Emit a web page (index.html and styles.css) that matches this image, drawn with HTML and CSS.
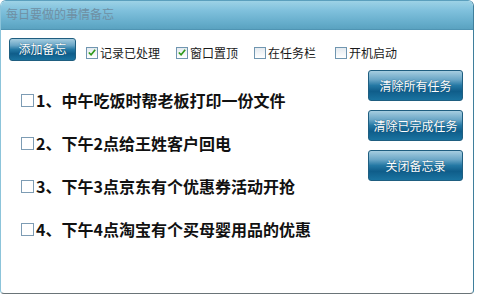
FILE: index.html
```html
<!DOCTYPE html>
<html lang="zh-CN">
<head>
<meta charset="utf-8">
<title>每日要做的事情备忘</title>
<link rel="stylesheet" href="styles.css">
</head>
<body>
<div class="window">
  <div class="titlebar">每日要做的事情备忘</div>
  <div class="content">
    <div class="toolbar">
      <button class="btn btn-add">添加备忘</button>
      <label class="chk chk-1"><span class="box checked"><svg viewBox="0 0 11 11" width="11" height="11"><path d="M2 5.5 L4.5 8 L9 2.5" fill="none" stroke="#2f9a1a" stroke-width="1.8"/></svg></span>记录已处理</label>
      <label class="chk chk-2"><span class="box checked"><svg viewBox="0 0 11 11" width="11" height="11"><path d="M2 5.5 L4.5 8 L9 2.5" fill="none" stroke="#2f9a1a" stroke-width="1.8"/></svg></span>窗口置顶</label>
      <label class="chk chk-3"><span class="box"></span>在任务栏</label>
      <label class="chk chk-4"><span class="box"></span>开机启动</label>
    </div>
    <div class="main">
      <ul class="tasks">
        <li class="task"><span class="tbox"></span>1、中午吃饭时帮老板打印一份文件</li>
        <li class="task"><span class="tbox"></span>2、下午2点给王姓客户回电</li>
        <li class="task"><span class="tbox"></span>3、下午3点京东有个优惠券活动开抢</li>
        <li class="task"><span class="tbox"></span>4、下午4点淘宝有个买母婴用品的优惠</li>
      </ul>
      <div class="actions">
        <button class="btn btn-side">清除所有任务</button>
        <button class="btn btn-side">清除已完成任务</button>
        <button class="btn btn-side">关闭备忘录</button>
      </div>
    </div>
  </div>
</div>
</body>
</html>
```
FILE: styles.css
```css
html, body {
  margin: 0;
  padding: 0;
  background: #ffffff;
}
body {
  font-family: "Noto Sans CJK SC", "Noto Sans", sans-serif;
  width: 479px;
  height: 297px;
  overflow: hidden;
}
.window {
  box-sizing: border-box;
  width: 474px;
  height: 294px;
  border: 1px solid #5b9fbd;
  border-right-color: #3f7f9c;
  border-bottom-color: #6a7478;
  border-left-color: #8cc4da;
  border-radius: 6px 6px 4px 4px;
  background: #ffffff;
  overflow: hidden;
  display: flex;
  flex-direction: column;
}
.titlebar {
  height: 29px;
  box-sizing: border-box;
  padding: 5px 0 0 5px;
  font-size: 12px;
  line-height: 16px;
  color: #6f8fa3;
  background: linear-gradient(#9dd2e6 0%, #7fc0dc 35%, #64acca 80%, #5aa2c0 100%);
  border-bottom: 1px solid #4f94b3;
}
.content {
  flex: 1;
  display: flex;
  flex-direction: column;
}
.toolbar {
  display: flex;
  align-items: center;
  padding: 8px 0 0 8px;
  height: 22px;
}
.btn {
  font-family: "Noto Sans CJK SC", sans-serif;
  color: #ffffff;
  font-size: 12px;
  line-height: 14px;
  padding: 0;
  border: 1px solid #1f5e80;
  border-radius: 3px;
  background: linear-gradient(#a6cde0 0%, #6aa6c6 30%, #2478a4 50%, #0f5d8a 70%, #1a73a0 100%);
  text-shadow: 0 0 1px #0b3f60;
}
.btn-add {
  width: 67px;
  height: 23px;
  margin-right: 10px;
}
.chk {
  display: flex;
  align-items: center;
  font-size: 12px;
  line-height: 14px;
  color: #1a1a1a;
  margin-top: 7px;
}
.box {
  box-sizing: border-box;
  width: 12px;
  height: 12px;
  border: 1px solid #7096b0;
  background: linear-gradient(#e4eaf0, #ffffff);
  margin-right: 2px;
  display: flex;
  align-items: center;
  justify-content: center;
}
.box svg { display: block; }
.chk-1 { margin-right: 16px; }
.chk-2 { margin-right: 16px; }
.chk-3 { margin-right: 19px; }
.main {
  flex: 1;
  display: flex;
  justify-content: space-between;
}
.tasks {
  list-style: none;
  margin: 0;
  padding: 30px 0 0 20px;
}
.task {
  display: flex;
  align-items: center;
  font-size: 16px;
  line-height: 20px;
  font-weight: bold;
  color: #111111;
  height: 20px;
  margin-bottom: 23px;
}
.tbox {
  box-sizing: border-box;
  width: 13px;
  height: 13px;
  border: 1px solid #7d9cb4;
  margin-right: 2px;
}
.actions {
  display: flex;
  flex-direction: column;
  gap: 9px;
  padding: 10px 10px 0 0;
}
.btn-side {
  width: 95px;
  height: 31px;
}
```
